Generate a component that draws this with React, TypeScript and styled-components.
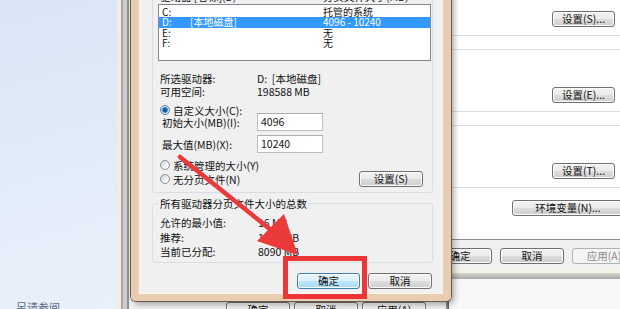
import styled, { createGlobalStyle } from 'styled-components';

const GlobalStyle = createGlobalStyle`
  html, body { margin: 0; padding: 0; }
  body {
    width: 620px;
    height: 309px;
    overflow: hidden;
    font-family: "Noto Sans CJK SC", "Noto Sans", sans-serif;
    font-size: 10.5px;
    color: #111;
  }
`;

const Screen = styled.div`
  position: relative;
  width: 620px;
  height: 309px;
  overflow: hidden;
  display: flex;
  background: #f8f8f8;
`;

const Sidebar = styled.div`
  width: 117px;
  flex: none;
  display: flex;
  flex-direction: column;
  justify-content: flex-end;
  background: linear-gradient(165deg, #d8e5f5 0%, #e2ecf8 55%, #e8f0fa 100%);
`;

const SidebarLink = styled.div`
  padding-left: 16px;
  margin-bottom: -5px;
  height: 14px;
  line-height: 14px;
  color: #5a6a84;
  font-size: 11px;
`;

/* ---- windows on the desktop ---- */

// system properties, advanced tab (furthest back)
const SysWindow = styled.div`
  position: absolute;
  left: 117px;
  top: -60px;
  width: 506px;
  display: flex;
  padding: 0 0 8px 13px;
  background: linear-gradient(to bottom, #f6f2df 0 2px, #d6d6d6 2px, #a9a9a9 100%) left bottom / 100% 8px no-repeat;
`;

const SysClient = styled.div`
  flex: 1;
  display: flex;
  flex-direction: column;
  background: #f0f0f0;
  padding-bottom: 7px;
`;

const TabPage = styled.div`
  display: flex;
  flex-direction: column;
  align-items: stretch;
  gap: 12px;
  background: #fff;
  border: 1px solid #898c95;
  border-top: none;
  margin-right: 5px;
  padding: 33px 6px 23px 6px;
`;

const SettingGroup = styled.div`
  height: 63px;
  box-sizing: border-box;
  border: 1px solid #d5dfe5;
  border-radius: 3px;
  display: flex;
  justify-content: flex-end;
  align-items: flex-end;
  padding: 0 8px 8px 0;
  & + & { margin-top: 1px; }
`;

// performance options (between the two)
const PerfWindow = styled.div`
  position: absolute;
  left: 117px;
  top: -60px;
  width: 332px;
  height: 386px;
  box-sizing: border-box;
  display: flex;
  padding: 0 3px 0 13px;
  background:
    linear-gradient(to right, #f4ebe2 0 4px, #a9a9a9 4px 6px, #cdcdcd 6px 10px, #8f8f8f 10px 12px, #e9e9e9 12px 13px) left top / 13px 100% no-repeat,
    linear-gradient(to right, #9a9a9a, #5a5a5a) right top / 3px 100% no-repeat;
`;

const PerfClient = styled.div`
  flex: 1;
  display: flex;
  flex-direction: column;
  justify-content: flex-end;
  background: #f0f0f0;
  padding: 0 20px 8px 0;
`;

const RightRow = styled.div<{ $gap?: number; $top?: number }>`
  display: flex;
  justify-content: flex-end;
  gap: ${(p) => p.$gap ?? 8}px;
  margin-top: ${(p) => p.$top ?? 0}px;
`;

const Button = styled.div<{ $w?: number; $primary?: boolean; $disabled?: boolean }>`
  width: ${(p) => p.$w ?? 63}px;
  height: 16px;
  box-sizing: border-box;
  flex: none;
  display: flex;
  align-items: center;
  justify-content: center;
  border: 1px solid ${(p) => (p.$primary ? '#3c7fb1' : p.$disabled ? '#adb2b5' : '#707070')};
  border-radius: 3px;
  box-shadow: inset 0 0 0 1px ${(p) => (p.$disabled ? '#f4f4f4' : '#fbfbfb')};
  background: ${(p) =>
    p.$primary
      ? 'linear-gradient(#eaf6fd 0%, #d9f0fc 50%, #bee6fd 50%, #a7d9f5 100%)'
      : p.$disabled
        ? '#f4f4f4'
        : 'linear-gradient(#f2f2f2 0%, #ebebeb 50%, #dddddd 50%, #cfcfcf 100%)'};
  color: ${(p) => (p.$disabled ? '#8a8a8a' : '#111')};
  font-size: 10.5px;
  line-height: 14px;
  white-space: nowrap;
`;

/* ---- virtual memory dialog ---- */

const VmWindow = styled.div`
  position: absolute;
  left: 131px;
  top: -22px;
  width: 320px;
  box-sizing: border-box;
  display: flex;
  flex-direction: column;
  border: 9px solid #e8cdb3;
  border-top: none;
  border-bottom-width: 8px;
  border-radius: 0 0 5px 5px;
  box-shadow:
    0 0 0 1px #6a5a4c,
    3px 3px 6px rgba(0, 0, 0, 0.35);
`;

const VmBody = styled.div`
  background: #f0f0f0;
  display: flex;
  flex-direction: column;
  padding: 8px 0 4px 0;
  box-shadow: 0 0 0 1px #fbf6f0;
`;

const GroupBox = styled.div<{ $h: number; $top?: number }>`
  margin-left: 12px;
  margin-top: ${(p) => p.$top ?? 0}px;
  width: 281px;
  height: ${(p) => p.$h}px;
  box-sizing: border-box;
  border: 1px solid #d5dfe5;
  border-radius: 3px;
  display: flex;
  flex-direction: column;
`;

const Legend = styled.div`
  align-self: flex-start;
  margin: -7px 0 0 6px;
  padding: 0 1px;
  height: 13px;
  line-height: 13px;
  background: #f0f0f0;
`;

const HeaderRow = styled.div`
  margin: 4px 0 0 7px;
  height: 12px;
  line-height: 12px;
  display: grid;
  grid-template-columns: 163px 1fr;
`;

const ListBox = styled.div`
  margin: 1px 0 0 5px;
  width: 273px;
  height: 57px;
  box-sizing: border-box;
  border: 1px solid #828790;
  background: #fff;
  padding-top: 1.5px;
`;

const ListRow = styled.div<{ $selected?: boolean }>`
  height: 10.5px;
  line-height: 10.5px;
  font-size: 10px;
  display: grid;
  grid-template-columns: 28px 133px 1fr;
  padding-left: 3px;
  background: ${(p) => (p.$selected ? '#3399ff' : 'transparent')};
  color: ${(p) => (p.$selected ? '#fff' : '#111')};
`;

const InfoRow = styled.div<{ $h: number; $label: number; $left: number }>`
  height: ${(p) => p.$h}px;
  line-height: ${(p) => p.$h}px;
  display: grid;
  grid-template-columns: ${(p) => p.$label}px 1fr;
  padding-left: ${(p) => p.$left}px;
  white-space: nowrap;
`;

const InfoBlock = styled.div<{ $top: number }>`
  margin-top: ${(p) => p.$top}px;
`;

const RadioRow = styled.div<{ $top: number; $h?: number }>`
  margin-top: ${(p) => p.$top}px;
  height: ${(p) => p.$h ?? 12}px;
  padding-left: 7px;
  padding-right: 9px;
  display: flex;
  align-items: center;
  white-space: nowrap;
`;

const Radio = styled.span<{ $checked?: boolean }>`
  width: 10px;
  height: 10px;
  box-sizing: border-box;
  border-radius: 50%;
  flex: none;
  margin-right: 3px;
  border: 1px solid ${(p) => (p.$checked ? '#5d7fa3' : '#8e8f8f')};
  background: ${(p) =>
    p.$checked
      ? 'radial-gradient(circle, #1d5aa0 0 1.8px, #5aa5e2 2.8px, #e6eef6 3.6px)'
      : 'linear-gradient(135deg, #cfd0d1, #f6f6f6 70%)'};
`;

const Spacer = styled.div`
  flex: 1;
`;

const FieldRow = styled.div<{ $top: number }>`
  margin-top: ${(p) => p.$top}px;
  height: 18px;
  padding-left: 9px;
  display: flex;
  align-items: center;
  white-space: nowrap;
`;

const FieldLabel = styled.span`
  width: 95px;
  flex: none;
  line-height: 12px;
  padding-top: 2px;
`;

const TextBox = styled.div`
  width: 66px;
  height: 18px;
  box-sizing: border-box;
  border: 1px solid #b9bcc3;
  border-top-color: #abadb3;
  background: #fff;
  padding-left: 3px;
  line-height: 15px;
`;

const DialogButtons = styled.div`
  margin-top: 10px;
  padding-right: 10px;
  display: flex;
  justify-content: flex-end;
  gap: 8px;
`;

/* ---- annotation overlay ---- */

const Highlight = styled.div`
  position: absolute;
  left: 283px;
  top: 256px;
  width: 84px;
  height: 43px;
  box-sizing: border-box;
  border: 5px solid #ee3535;
  pointer-events: none;
`;

const ArrowLayer = styled.svg`
  position: absolute;
  left: 0;
  top: 0;
  pointer-events: none;
`;

const drives = [
  { d: 'C:', label: '', size: '托管的系统' },
  { d: 'D:', label: '[本地磁盘]', size: '4096 - 10240', selected: true },
  { d: 'E:', label: '', size: '无' },
  { d: 'F:', label: '', size: '无' },
];

export default function App() {
  return (
    <>
      <GlobalStyle />
      <Screen>
        <Sidebar>
          <SidebarLink>另请参阅</SidebarLink>
        </Sidebar>

        <SysWindow>
          <SysClient>
            <TabPage>
              <SettingGroup>
                <Button>设置(S)...</Button>
              </SettingGroup>
              <SettingGroup>
                <Button>设置(E)...</Button>
              </SettingGroup>
              <SettingGroup>
                <Button>设置(T)...</Button>
              </SettingGroup>
              <RightRow>
                <Button $w={112}>环境变量(N)...</Button>
              </RightRow>
            </TabPage>
            <RightRow $top={8} $gap={8}>
              <Button $w={64}>确定</Button>
              <Button $w={64}>取消</Button>
              <Button $w={64} $disabled>
                应用(A)
              </Button>
            </RightRow>
          </SysClient>
        </SysWindow>

        <PerfWindow>
          <PerfClient>
            <RightRow $gap={4}>
              <Button $w={64}>确定</Button>
              <Button $w={64}>取消</Button>
              <Button $w={64}>应用(A)</Button>
            </RightRow>
          </PerfClient>
        </PerfWindow>

        <VmWindow>
          <VmBody>
            <GroupBox $h={207}>
              <HeaderRow>
                <span>驱动器 [卷标](D)</span>
                <span>分页文件大小(MB)</span>
              </HeaderRow>
              <ListBox>
                {drives.map((r) => (
                  <ListRow key={r.d} $selected={r.selected}>
                    <span>{r.d}</span>
                    <span>{r.label}</span>
                    <span>{r.size}</span>
                  </ListRow>
                ))}
              </ListBox>
              <InfoBlock $top={11}>
                <InfoRow $h={13} $label={97} $left={7}>
                  <span>所选驱动器:</span>
                  <span>D:&nbsp;&nbsp;[本地磁盘]</span>
                </InfoRow>
                <InfoRow $h={13} $label={97} $left={7}>
                  <span>可用空间:</span>
                  <span>198588 MB</span>
                </InfoRow>
              </InfoBlock>
              <RadioRow $top={6}>
                <Radio $checked />
                自定义大小(C):
              </RadioRow>
              <FieldRow $top={-3}>
                <FieldLabel>初始大小(MB)(I):</FieldLabel>
                <TextBox>4096</TextBox>
              </FieldRow>
              <FieldRow $top={4}>
                <FieldLabel>最大值(MB)(X):</FieldLabel>
                <TextBox>10240</TextBox>
              </FieldRow>
              <RadioRow $top={6}>
                <Radio />
                系统管理的大小(Y)
              </RadioRow>
              <RadioRow $top={0} $h={16}>
                <Radio />
                无分页文件(N)
                <Spacer />
                <Button $w={64}>设置(S)</Button>
              </RadioRow>
            </GroupBox>

            <GroupBox $h={60} $top={10}>
              <Legend>所有驱动器分页文件大小的总数</Legend>
              <InfoBlock $top={6}>
                <InfoRow $h={14.5} $label={98} $left={7}>
                  <span>允许的最小值:</span>
                  <span>16 MB</span>
                </InfoRow>
                <InfoRow $h={14.5} $label={98} $left={7}>
                  <span>推荐:</span>
                  <span>1215 MB</span>
                </InfoRow>
                <InfoRow $h={14.5} $label={98} $left={7}>
                  <span>当前已分配:</span>
                  <span>8090 MB</span>
                </InfoRow>
              </InfoBlock>
            </GroupBox>

            <DialogButtons>
              <Button $primary>确定</Button>
              <Button $w={64}>取消</Button>
            </DialogButtons>
          </VmBody>
        </VmWindow>

        <ArrowLayer width="620" height="309" viewBox="0 0 620 309">
          <line x1="180" y1="157" x2="271" y2="230" stroke="#ea3a3a" strokeWidth="4.5" strokeLinecap="round" />
          <polygon points="298,255 257,241 284,214" fill="#ea3a3a" />
        </ArrowLayer>
        <Highlight />
      </Screen>
    </>
  );
}
